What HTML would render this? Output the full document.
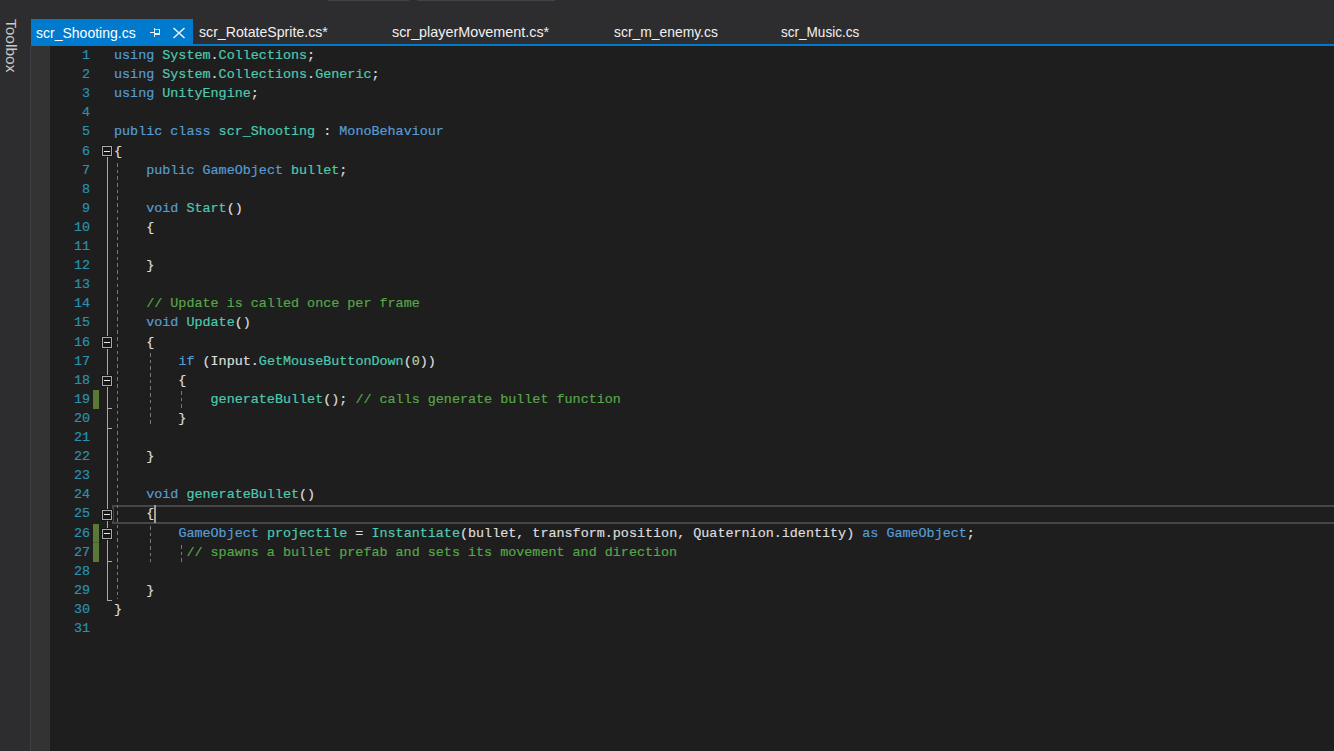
<!DOCTYPE html>
<html><head><meta charset="utf-8"><style>
html,body{margin:0;padding:0;}
body{width:1334px;height:751px;background:#2D2D30;position:relative;overflow:hidden;font-family:"Liberation Sans",sans-serif;}
.tb{position:absolute;top:0;height:1px;background:#434346;}
#toolbox{position:absolute;left:6px;top:19px;width:12px;height:54px;}
#toolbox span{position:absolute;left:0;top:0;transform-origin:0 0;transform:translate(11px,0) rotate(90deg);color:#C8C8C8;font-size:15.5px;line-height:12px;white-space:nowrap;}
#editor{position:absolute;left:50px;top:46px;right:0;bottom:0;background:#1E1E1E;}
#margin{position:absolute;left:31px;top:46px;width:19px;bottom:0;background:#333333;}
#mline{position:absolute;left:30px;top:46px;width:1px;bottom:0;background:#3F3F46;}
#tabline{position:absolute;left:31px;top:44px;right:0;height:2px;background:#007ACC;}
#acttab{position:absolute;left:31px;top:19px;width:162px;height:27px;background:#007ACC;}
.tab{position:absolute;top:22px;transform-origin:0 0;font-size:15px;line-height:20px;color:#F1F1F1;white-space:nowrap;}
.ln{position:absolute;left:60px;width:30px;text-align:right;font-family:"Liberation Mono",monospace;font-size:13.42px;line-height:19.1px;height:19.1px;color:#2B91AF;-webkit-text-stroke:0.2px currentColor;}
.cl{position:absolute;left:114px;font-family:"Liberation Mono",monospace;font-size:13.42px;line-height:19.1px;height:19.1px;white-space:pre;color:#DCDCDC;-webkit-text-stroke:0.2px currentColor;}
.ig{position:absolute;width:1px;background:repeating-linear-gradient(to bottom,#767676 0,#767676 3.6px,transparent 3.6px,transparent 6.7px);}
.fb{position:absolute;left:102px;width:8px;border:1px solid #A8A8A8;background:#171717;box-shadow:0 0 0 1px #151515;}
.fb i{position:absolute;left:1px;width:6px;height:1px;background:#E8E8E8;}
.fl{position:absolute;left:107px;width:1px;background:#A8A8A8;}
.ft{position:absolute;left:107px;width:5px;height:1px;background:#A8A8A8;}
.cb{position:absolute;left:93px;width:6px;background:#5A7838;}
#curline{position:absolute;left:112px;top:505px;right:0;height:15px;border:2px solid #464646;border-right:none;}
#caret{position:absolute;left:154px;top:505px;width:2px;height:18px;background:#A0A0A0;}
</style></head><body>
<div class="tb" style="left:328px;width:81px"></div>
<div class="tb" style="left:417px;width:138px"></div>
<div id="toolbox"><span>Toolbox</span></div>
<div id="editor"></div>
<div id="margin"></div>
<div id="mline"></div>
<div id="tabline"></div>
<div id="acttab"></div>
<div class="tab" style="left:36px;top:23px;color:#FFFFFF;transform:scaleX(0.934)">scr_Shooting.cs</div>
<svg style="position:absolute;left:146px;top:24px" width="18" height="16" viewBox="0 0 18 16" shape-rendering="crispEdges">
<rect x="4" y="8" width="4" height="1" fill="#E6F0FA"/>
<rect x="8" y="4" width="1" height="9" fill="#E6F0FA"/>
<rect x="9" y="5" width="4" height="1" fill="#B8D4EE"/>
<rect x="13" y="5" width="1" height="6" fill="#E6F0FA"/>
<rect x="9" y="9" width="4" height="2" fill="#E6F0FA"/>
</svg>
<svg style="position:absolute;left:172px;top:27px" width="14" height="12" viewBox="0 0 14 12">
<path d="M1.5 1L12.5 11M12.5 1L1.5 11" stroke="#E6F0FA" stroke-width="1.6" fill="none"/>
</svg>
<div class="tab" style="left:199px;transform:scaleX(0.942)">scr_RotateSprite.cs*</div>
<div class="tab" style="left:392px;transform:scaleX(0.957)">scr_playerMovement.cs*</div>
<div class="tab" style="left:614px;transform:scaleX(0.925)">scr_m_enemy.cs</div>
<div class="tab" style="left:781px;transform:scaleX(0.903)">scr_Music.cs</div>
<div id="curline"></div>
<div class="ln" style="top:46.00px">1</div>
<div class="cl" style="top:46.00px"><span style="color:#569CD6">using</span><span style="color:#DCDCDC"> </span><span style="color:#4EC9B0">System</span><span style="color:#DCDCDC">.</span><span style="color:#4EC9B0">Collections</span><span style="color:#DCDCDC">;</span></div>
<div class="ln" style="top:65.10px">2</div>
<div class="cl" style="top:65.10px"><span style="color:#569CD6">using</span><span style="color:#DCDCDC"> </span><span style="color:#4EC9B0">System</span><span style="color:#DCDCDC">.</span><span style="color:#4EC9B0">Collections</span><span style="color:#DCDCDC">.</span><span style="color:#4EC9B0">Generic</span><span style="color:#DCDCDC">;</span></div>
<div class="ln" style="top:84.20px">3</div>
<div class="cl" style="top:84.20px"><span style="color:#569CD6">using</span><span style="color:#DCDCDC"> </span><span style="color:#4EC9B0">UnityEngine</span><span style="color:#DCDCDC">;</span></div>
<div class="ln" style="top:103.30px">4</div>
<div class="ln" style="top:122.40px">5</div>
<div class="cl" style="top:122.40px"><span style="color:#569CD6">public</span><span style="color:#DCDCDC"> </span><span style="color:#569CD6">class</span><span style="color:#DCDCDC"> </span><span style="color:#4EC9B0">scr_Shooting</span><span style="color:#DCDCDC"> : </span><span style="color:#569CD6">MonoBehaviour</span></div>
<div class="ln" style="top:141.50px">6</div>
<div class="cl" style="top:141.50px"><span style="color:#DCDCDC">{</span></div>
<div class="ln" style="top:160.60px">7</div>
<div class="cl" style="top:160.60px"><span style="color:#DCDCDC">    </span><span style="color:#569CD6">public</span><span style="color:#DCDCDC"> </span><span style="color:#569CD6">GameObject</span><span style="color:#DCDCDC"> </span><span style="color:#4EC9B0">bullet</span><span style="color:#DCDCDC">;</span></div>
<div class="ln" style="top:179.70px">8</div>
<div class="ln" style="top:198.80px">9</div>
<div class="cl" style="top:198.80px"><span style="color:#DCDCDC">    </span><span style="color:#569CD6">void</span><span style="color:#DCDCDC"> </span><span style="color:#4EC9B0">Start</span><span style="color:#DCDCDC">()</span></div>
<div class="ln" style="top:217.90px">10</div>
<div class="cl" style="top:217.90px"><span style="color:#DCDCDC">    {</span></div>
<div class="ln" style="top:237.00px">11</div>
<div class="ln" style="top:256.10px">12</div>
<div class="cl" style="top:256.10px"><span style="color:#DCDCDC">    }</span></div>
<div class="ln" style="top:275.20px">13</div>
<div class="ln" style="top:294.30px">14</div>
<div class="cl" style="top:294.30px"><span style="color:#DCDCDC">    </span><span style="color:#57A64A">// Update is called once per frame</span></div>
<div class="ln" style="top:313.40px">15</div>
<div class="cl" style="top:313.40px"><span style="color:#DCDCDC">    </span><span style="color:#569CD6">void</span><span style="color:#DCDCDC"> </span><span style="color:#4EC9B0">Update</span><span style="color:#DCDCDC">()</span></div>
<div class="ln" style="top:332.50px">16</div>
<div class="cl" style="top:332.50px"><span style="color:#DCDCDC">    {</span></div>
<div class="ln" style="top:351.60px">17</div>
<div class="cl" style="top:351.60px"><span style="color:#DCDCDC">        </span><span style="color:#569CD6">if</span><span style="color:#DCDCDC"> (Input.</span><span style="color:#4EC9B0">GetMouseButtonDown</span><span style="color:#DCDCDC">(</span><span style="color:#B5CEA8">0</span><span style="color:#DCDCDC">))</span></div>
<div class="ln" style="top:370.70px">18</div>
<div class="cl" style="top:370.70px"><span style="color:#DCDCDC">        {</span></div>
<div class="ln" style="top:389.80px">19</div>
<div class="cl" style="top:389.80px"><span style="color:#DCDCDC">            </span><span style="color:#4EC9B0">generateBullet</span><span style="color:#DCDCDC">(); </span><span style="color:#57A64A">// calls generate bullet function</span></div>
<div class="ln" style="top:408.90px">20</div>
<div class="cl" style="top:408.90px"><span style="color:#DCDCDC">        }</span></div>
<div class="ln" style="top:428.00px">21</div>
<div class="ln" style="top:447.10px">22</div>
<div class="cl" style="top:447.10px"><span style="color:#DCDCDC">    }</span></div>
<div class="ln" style="top:466.20px">23</div>
<div class="ln" style="top:485.30px">24</div>
<div class="cl" style="top:485.30px"><span style="color:#DCDCDC">    </span><span style="color:#569CD6">void</span><span style="color:#DCDCDC"> </span><span style="color:#4EC9B0">generateBullet</span><span style="color:#DCDCDC">()</span></div>
<div class="ln" style="top:504.40px">25</div>
<div class="cl" style="top:504.40px"><span style="color:#DCDCDC">    {</span></div>
<div class="ln" style="top:523.50px">26</div>
<div class="cl" style="top:523.50px"><span style="color:#DCDCDC">        </span><span style="color:#569CD6">GameObject</span><span style="color:#DCDCDC"> </span><span style="color:#4EC9B0">projectile</span><span style="color:#DCDCDC"> = </span><span style="color:#4EC9B0">Instantiate</span><span style="color:#DCDCDC">(bullet, transform.position, Quaternion.identity) </span><span style="color:#569CD6">as</span><span style="color:#DCDCDC"> </span><span style="color:#569CD6">GameObject</span><span style="color:#DCDCDC">;</span></div>
<div class="ln" style="top:542.60px">27</div>
<div class="cl" style="top:542.60px"><span style="color:#DCDCDC">         </span><span style="color:#57A64A">// spawns a bullet prefab and sets its movement and direction</span></div>
<div class="ln" style="top:561.70px">28</div>
<div class="ln" style="top:580.80px">29</div>
<div class="cl" style="top:580.80px"><span style="color:#DCDCDC">    }</span></div>
<div class="ln" style="top:599.90px">30</div>
<div class="cl" style="top:599.90px"><span style="color:#DCDCDC">}</span></div>
<div class="ln" style="top:619.00px">31</div>
<div class="ig" style="left:117px;top:163px;height:436px"></div>
<div class="ig" style="left:150px;top:353px;height:74px"></div>
<div class="ig" style="left:181px;top:391px;height:18px"></div>
<div class="ig" style="left:150px;top:526px;height:36px"></div>
<div class="ig" style="left:181px;top:545px;height:17px"></div>
<div class="fl" style="top:150px;height:451px"></div>
<div class="ft" style="top:408px"></div>
<div class="ft" style="top:428px"></div>
<div class="ft" style="top:561px"></div>
<div class="ft" style="top:600px"></div>
<div class="fb" style="top:146px;height:8px"><i style="top:4px"></i></div>
<div class="fb" style="top:337px;height:9px"><i style="top:4px"></i></div>
<div class="fb" style="top:376px;height:8px"><i style="top:3px"></i></div>
<div class="fb" style="top:510px;height:8px"><i style="top:3px"></i></div>
<div class="fb" style="top:529px;height:8px"><i style="top:3px"></i></div>
<div class="cb" style="top:389.80px;height:19.10px"></div>
<div class="cb" style="top:523.50px;height:19.10px"></div>
<div class="cb" style="top:542.60px;height:19.10px"></div>
<div class="cb" style="top:542.10px;height:1px;background:#4C6236"></div>
<div id="caret"></div>
</body></html>
